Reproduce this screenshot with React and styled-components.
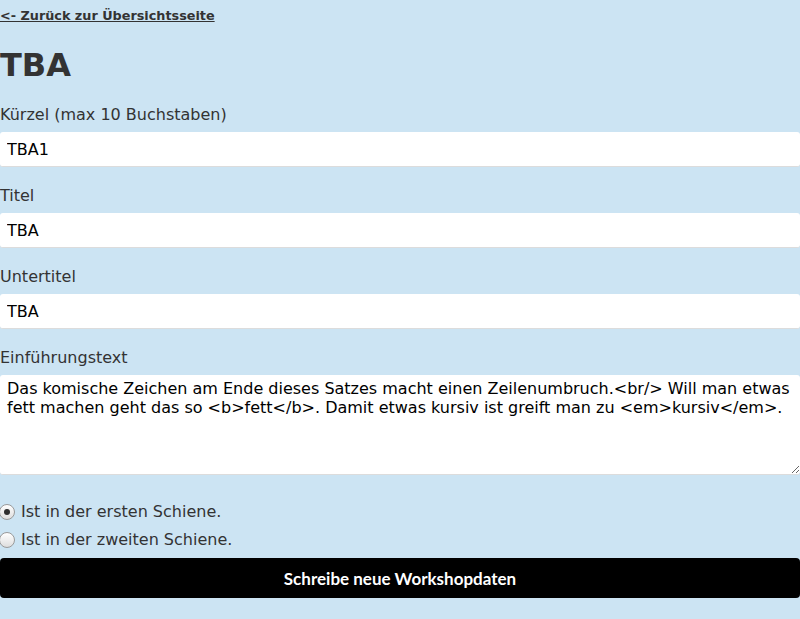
import React from 'react';
import styled, { createGlobalStyle } from 'styled-components';

const GlobalStyle = createGlobalStyle`
    html, body {
        margin: 0;
        padding: 0;
        background-color: #cce4f3;
    }
    body {
        font-family: "DejaVu Sans", sans-serif;
        color: #333;
    }
`;

const Page = styled.form`
    display: flex;
    flex-direction: column;
    padding-top: 8px;
`;

const BackLink = styled.a`
    font-size: 12.8px;
    line-height: 15px;
    font-weight: bold;
    color: #333;
    text-decoration: underline;
    align-self: flex-start;
`;

const Title = styled.h1`
    font-size: 32px;
    line-height: 38px;
    font-weight: bold;
    margin: 23px 0 22px;
`;

const Field = styled.div`
    display: flex;
    flex-direction: column;
    gap: 8px;
    margin-bottom: 20px;
`;

const Label = styled.label`
    font-size: 16px;
    line-height: 18px;
`;

const TextInput = styled.input`
    box-sizing: border-box;
    width: 100%;
    height: 35px;
    padding: 0 7px;
    border: none;
    border-bottom: 1px solid #dcdcdc;
    border-radius: 3px;
    background: #fff;
    font-family: "DejaVu Sans", sans-serif;
    font-size: 16px;
    color: #000;
    outline: none;
`;

const TextArea = styled.textarea`
    box-sizing: border-box;
    width: 100%;
    height: 100px;
    padding: 4px 7px;
    border: none;
    border-bottom: 1px solid #dcdcdc;
    border-radius: 3px;
    background: #fff;
    font-family: "DejaVu Sans", sans-serif;
    font-size: 16px;
    line-height: 19px;
    color: #000;
    outline: none;
    resize: vertical;
`;

const RadioGroup = styled.div`
    display: flex;
    flex-direction: column;
    gap: 10px;
    margin-top: 8px;
    margin-bottom: 9px;
`;

const RadioRow = styled.label`
    display: flex;
    align-items: center;
    gap: 6px;
    font-size: 16px;
    line-height: 18px;
`;

const Radio = styled.input`
    appearance: none;
    box-sizing: border-box;
    margin: 0 0 0 -1px;
    width: 16px;
    height: 16px;
    border-radius: 50%;
    border: 1px solid #9a9a9a;
    background: linear-gradient(#ffffff, #dedede);
    display: grid;
    place-items: center;

    &:checked::after {
        content: '';
        width: 6px;
        height: 6px;
        border-radius: 50%;
        background: #2e2e2e;
    }
`;

const SubmitButton = styled.button`
    height: 40px;
    width: 100%;
    border: none;
    border-radius: 4px;
    background: #000;
    color: #fff;
    font-family: Lato, sans-serif;
    font-weight: bold;
    font-size: 17px;
    cursor: pointer;
`;

const fields = [
    { id: 'kuerzel', label: 'Kürzel (max 10 Buchstaben)', value: 'TBA1' },
    { id: 'titel', label: 'Titel', value: 'TBA' },
    { id: 'untertitel', label: 'Untertitel', value: 'TBA' },
];

const intro =
    'Das komische Zeichen am Ende dieses Satzes macht einen Zeilenumbruch.<br/> Will man etwas fett machen geht das so <b>fett</b>. Damit etwas kursiv ist greift man zu <em>kursiv</em>.';

const App = () => (
    <>
        <GlobalStyle />
        <Page onSubmit={(e) => e.preventDefault()}>
            <BackLink href="#">&lt;- Zurück zur Übersichtsseite</BackLink>
            <Title>TBA</Title>

            {fields.map((f) => (
                <Field key={f.id}>
                    <Label htmlFor={f.id}>{f.label}</Label>
                    <TextInput id={f.id} type="text" defaultValue={f.value} />
                </Field>
            ))}

            <Field>
                <Label htmlFor="intro">Einführungstext</Label>
                <TextArea id="intro" defaultValue={intro} />
            </Field>

            <RadioGroup>
                <RadioRow>
                    <Radio type="radio" name="schiene" value="1" defaultChecked />
                    Ist in der ersten Schiene.
                </RadioRow>
                <RadioRow>
                    <Radio type="radio" name="schiene" value="2" />
                    Ist in der zweiten Schiene.
                </RadioRow>
            </RadioGroup>

            <SubmitButton type="submit">Schreibe neue Workshopdaten</SubmitButton>
        </Page>
    </>
);

export default App;
